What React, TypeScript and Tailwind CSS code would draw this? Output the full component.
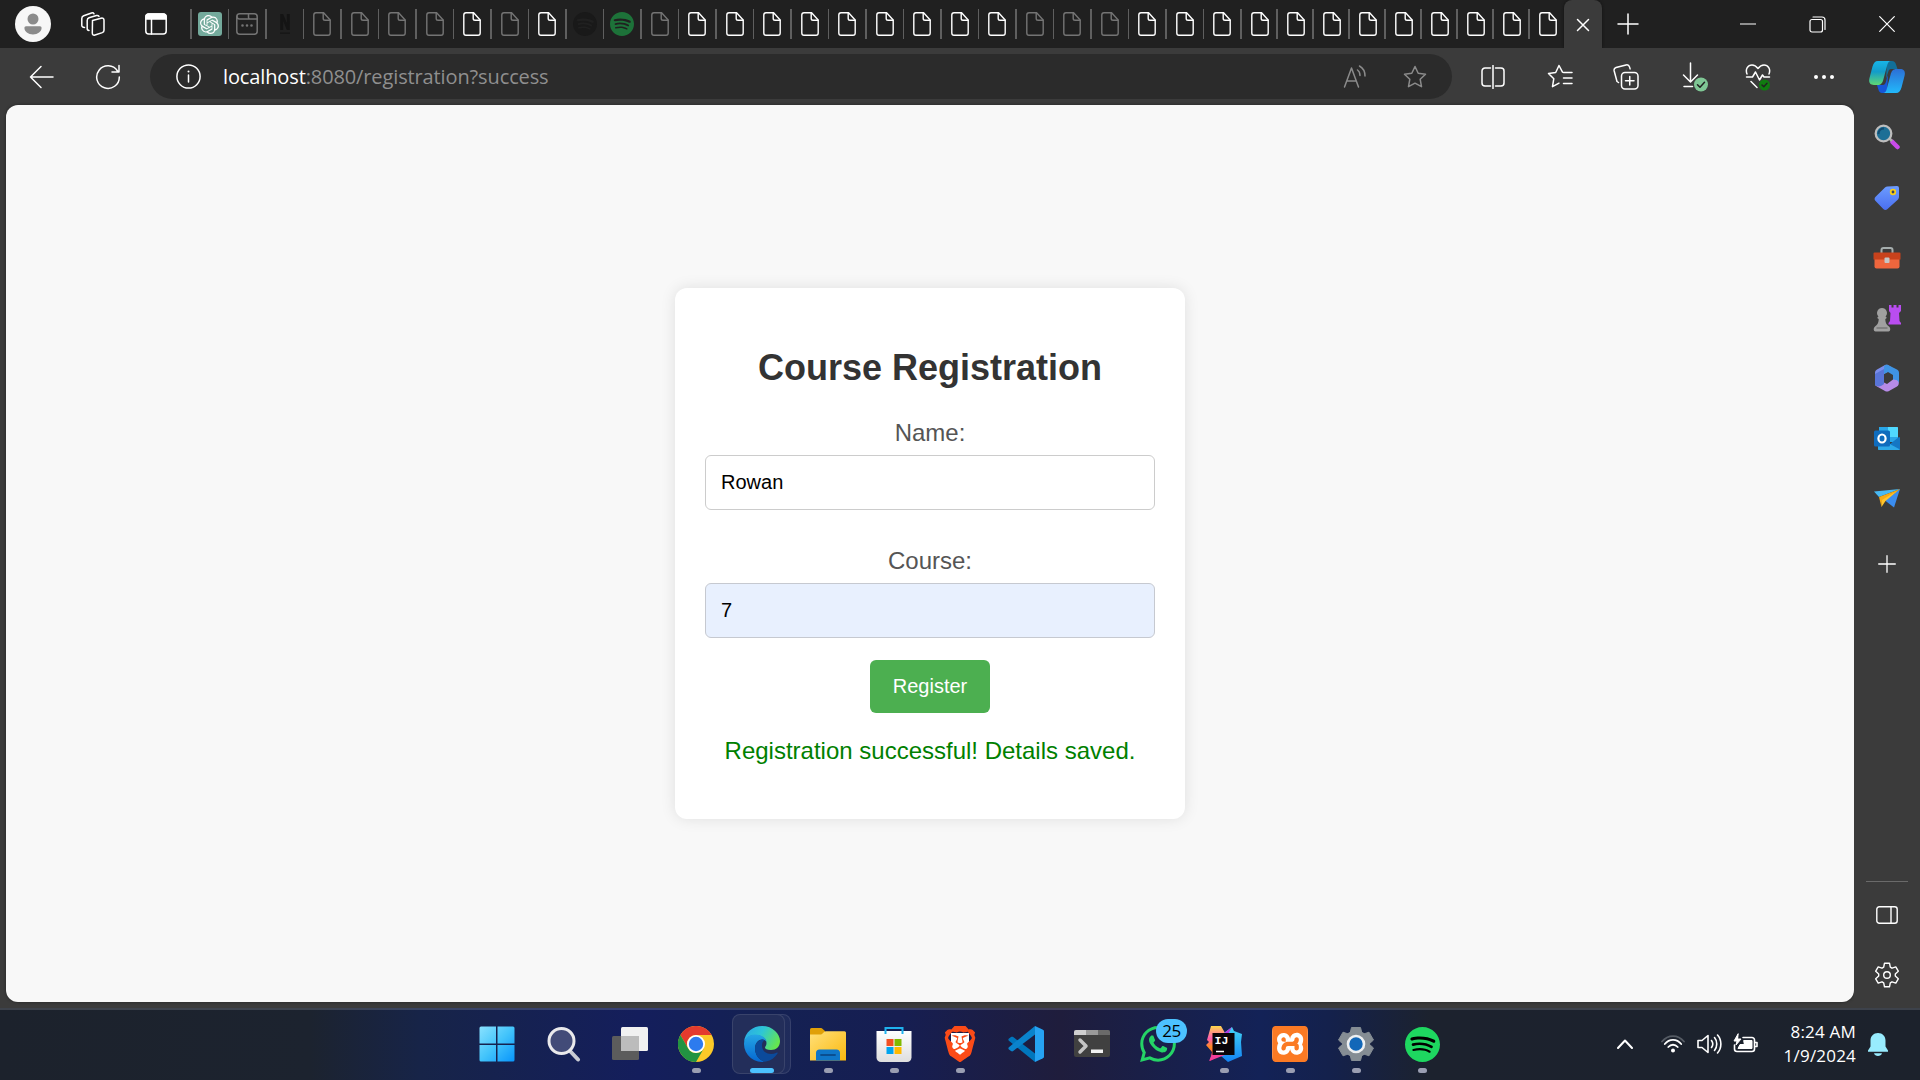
import React from "react";
import { SiOpenai, SiSpotify, SiBrave, SiXampp, SiWhatsapp } from "react-icons/si";

type P = { children: React.ReactNode; w?: number; h?: number; vb?: string; sw?: number; className?: string };

function Line({ children, w = 24, h = 24, vb = "0 0 24 24", sw = 1.5, className = "text-white" }: P) {
  return (
    <svg width={w} height={h} viewBox={vb} fill="none" stroke="currentColor" strokeWidth={sw} strokeLinecap="round" strokeLinejoin="round" className={"shrink-0 " + className}>
      {children}
    </svg>
  );
}

function Art({ children, w = 36, h = 36, vb = "0 0 36 36" }: P) {
  return (
    <svg width={w} height={h} viewBox={vb} className="shrink-0">
      {children}
    </svg>
  );
}

function FileIcon({ dim }: { dim: boolean }) {
  return (
    <Line w={18} vb="0 0 18 24" sw={1.4} className={dim ? "text-[#747474]" : "text-white"}>
      <path d="M3 .8h7.6L17.2 8v13a2.2 2.2 0 0 1-2.2 2.2H3A2.2 2.2 0 0 1 .8 21V3A2.2 2.2 0 0 1 3 .8z" />
      <path d="M10.2 1v5.4a1.8 1.8 0 0 0 1.8 1.8h5" />
    </Line>
  );
}

function TabIcon({ kind }: { kind: string }) {
  if (kind === "gpt")
    return (
      <div className="flex size-6 items-center justify-center rounded-[3px] bg-[#74aa9c] text-white">
        <SiOpenai size={19} />
      </div>
    );
  if (kind === "app")
    return (
      <Line w={22} h={22} vb="0 0 22 22" className="text-[#747474]">
        <rect x=".8" y=".8" width="20.4" height="20.4" rx="3" />
        <path d="M1 3.500c0 1.500 1 2.500 2.500 2.500h18M12.500 1v3.500a1.500 1.500 0 0 0 1.500 1.500" />
        <path d="M6.500 12.500h.01M11 12.500h.01M15.500 12.500h.01" strokeWidth="2.600" />
      </Line>
    );
  if (kind === "n")
    return (
      <Art w={12} h={22} vb="0 0 12 22">
        <path d="M1.200 1h3l3.600 9V1h3v16h-3L4.200 8v9h-3zM1 19.500h10v1.300H1z" fill="#141414" />
      </Art>
    );
  if (kind === "dark") return <SiSpotify size={24} className="text-[#191919]" />;
  if (kind === "spot") return <SiSpotify size={24} className="text-[#1d7239]" />;
  return <FileIcon dim={kind === "d"} />;
}

const tabs = "gpt app n d d d d b d b dark spot d b b b b b b b b b d d d b b b b b b b b b b b b".split(" ");

function TopBar() {
  return (
    <div className="flex h-12 shrink-0 bg-[#202020]">
      <div className="flex w-[190px] shrink-0 items-center pl-[15px]">
        <Art w={36} h={36}>
          <circle cx="18" cy="18" r="18" fill="#f7f7f7" />
          <circle cx="18" cy="13" r="5.500" fill="#8b8b8b" />
          <path d="M11 20.200h14a1.600 1.600 0 0 1 1.600 1.600c0 4-3.800 6.600-8.600 6.600s-8.600-2.600-8.600-6.600a1.600 1.600 0 0 1 1.600-1.600z" fill="#8b8b8b" />
        </Art>
        <div className="w-[29px]" />
        <Line w={26} h={26} vb="0 0 26 26">
          <path d="M12.500 9.500 21 7.200c1.800-.5 3 .3 3 2v10c0 1.200-.6 2-1.700 2.400L15 24c-1.600.5-2.700-.3-2.700-1.900z" />
          <path d="M9 19.500c-1 0-1.800-.7-1.800-1.900V9.500c0-1.400.6-2.200 1.800-2.700l7.500-2.300c1.200-.3 2 0 2.500.9M4.500 16.500c-1.600 0-2.700-.7-2.700-2.200V7.500c0-1.400.6-2.300 1.900-2.800L11.500 2c1.200-.4 2-.1 2.500.8" />
        </Line>
        <div className="w-[39px]" />
        <Line w={22} h={22} vb="0 0 22 22">
          <rect x=".8" y="1" width="20.400" height="20" rx="3" />
          <path d="M1 3.500A2.500 2.500 0 0 1 3.500 1h15A2.500 2.500 0 0 1 21 3.500V6H1z" fill="currentColor" />
          <path d="M6.500 6v15" />
        </Line>
      </div>
      {tabs.map((k, i) => (
        <div key={i} className={(i < 28 ? "w-[37.5px]" : "w-[36px]") + " flex shrink-0 items-center"}>
          <div className="h-[30px] w-[1.5px] shrink-0 bg-[#5f5f5f]" />
          <div className="flex w-[36px] shrink-0 justify-center">
            <TabIcon kind={k} />
          </div>
        </div>
      ))}
      <div className="flex w-[38px] shrink-0 items-center justify-center rounded-t-lg bg-[#3b3b3b] shadow-[0_0_3px_#111]">
        <Line w={14} h={14} vb="0 0 14 14" className="mt-0.5 text-white">
          <path d="m1.500 1.500 11 11M12.500 1.500l-11 11" />
        </Line>
      </div>
      <div className="flex grow items-center pl-[15px]">
        <Line w={22} h={22} vb="0 0 22 22">
          <path d="M11 1v20M1 11h20" />
        </Line>
        <div className="w-[101px]" />
        <Line w={16} h={16} vb="0 0 16 16" sw={1.2}>
          <path d="M.5 8h15" />
        </Line>
        <div className="w-[53px]" />
        <Line w={17} h={17} vb="0 0 17 17" sw={1.2}>
          <rect x="1" y="3.500" width="12.500" height="12.500" rx="2" />
          <path d="M4 1h9a3 3 0 0 1 3 3v9.500" />
        </Line>
        <div className="w-[53px]" />
        <Line w={16} h={16} vb="0 0 16 16" sw={1.2}>
          <path d="m.7.700 14.600 14.600M15.300.700.700 15.300" />
        </Line>
      </div>
    </div>
  );
}

const star = "m12 1.500 3.200 6.700 7.300 1-5.300 5.100 1.300 7.400L12 18.200l-6.500 3.500 1.300-7.400L1.500 9.200l7.300-1z";

function Copilot() {
  return (
    <Art w={36} h={34} vb="0 0 36 34">
      <defs>
        <linearGradient id="cpA" x1="0" y1="0" x2="0" y2="1">
          <stop offset="0" stopColor="#17b5e8" />
          <stop offset=".45" stopColor="#139cc9" />
          <stop offset="1" stopColor="#5fd873" />
        </linearGradient>
        <linearGradient id="cpB" x1="0" y1="0" x2="0" y2="1">
          <stop offset="0" stopColor="#2c6fd6" />
          <stop offset="1" stopColor="#22b9fb" />
        </linearGradient>
      </defs>
      <path d="M18 1h5c2.200 0 3.400 1.300 4 3.400L28.500 9H22c-3 0-3 5-5 10z" fill="#116f99" />
      <path d="M18 33h-5c-2 0-3-1-3.600-3.400L8 25h6c3 0 3-5 5-10z" fill="#1656d8" />
      <path d="M9 1h13c-2 0-3 1.500-3.600 3.600L14.500 19c-1 4-2.500 6-6 6H5c-4.500 0-5.500-3-4.500-7l3-11.500C4.500 3 6 1 9 1z" fill="url(#cpA)" />
      <path d="M27 33H14c2 0 3-1.500 3.600-3.600L21.500 15c1-4 2.500-6 6-6H31c4.500 0 5.500 3 4.500 7l-3 11.500C31.500 31 30 33 27 33z" fill="url(#cpB)" />
    </Art>
  );
}

function Toolbar() {
  return (
    <div className="flex h-[57px] shrink-0 items-center bg-[#3b3b3b] pl-[29px]">
      <Line w={25} h={24} vb="0 0 25 24">
        <path d="M24 12H1.500M12 1.500 1.500 12 12 22.500" />
      </Line>
      <div className="w-[41px]" />
      <Line w={26} h={26} vb="0 0 26 26">
        <path d="M22.500 7A11.300 11.300 0 1 0 24.300 13M24 1.500V8h-7" />
      </Line>
      <div className="ml-[29px] flex h-[45px] w-[1302px] shrink-0 items-center rounded-full bg-[#2b2b2b] pl-[26px]">
        <Line w={25} h={25} vb="0 0 25 25">
          <circle cx="12.500" cy="12.500" r="11.600" />
          <path d="M12.500 11v7" />
          <path d="M12.500 7.500h.01" strokeWidth="2" />
        </Line>
        <div className="ml-[22px] w-[1120px] whitespace-nowrap font-['Open_Sans','Noto_Sans',sans-serif] text-[20px] leading-[27px] tracking-[-0.12px] text-[#8f8f8f]">
          <span className="text-white">localhost</span>:8080/registration?success
        </div>
        <Line w={25} h={24} vb="0 0 25 24" className="text-[#8b8b8b]">
          <path d="m1.500 22 7-19 7 19M4 16h9M14.500 5c1.700 1.200 2.500 3 2.500 5.500M16.500 1c3.500 2 5.500 5.500 5.500 10" />
        </Line>
        <div className="w-[35px]" />
        <Line className="text-[#8b8b8b]">
          <path d={star} />
        </Line>
      </div>
      <div className="ml-[29px] flex items-center">
        <Line w={24} h={24}>
          <path d="M9.500 3H4a3 3 0 0 0-3 3v12a3 3 0 0 0 3 3h5.500M14.500 3H20a3 3 0 0 1 3 3v12a3 3 0 0 1-3 3h-5.500M12 .500v23" />
        </Line>
        <div className="w-[42px]" />
        <Line w={26} h={25} vb="0 0 26 25">
          <path d="M15.500 8.200 12 1.500 8.700 8.500l-7.200 1 5.300 5.200-1.300 8L12 19.200" />
          <path d="M16.500 8.500H25M16.500 14H25M16.500 19.500H25" />
        </Line>
        <div className="w-[40px]" />
        <Line w={26} h={26} vb="0 0 26 26">
          <rect x="8.500" y="8.500" width="16.500" height="16.500" rx="3.500" />
          <path d="M16.750 12.500v8.500M12.500 16.750H21M5.500 18.500 4 17.500 1.200 7C.8 5.300 1.300 4 3 3.500l10-2.600c1.700-.4 3 .3 3.500 2l.6 2" />
        </Line>
        <div className="w-[43px]" />
        <Line w={26} h={30} vb="0 0 26 30">
          <path d="M8.500 1v18.500M1.500 13l7 7 7-7M2 24.500h8.500" />
          <circle cx="19" cy="22.500" r="7" fill="#7fc795" stroke="none" />
          <path d="m15.500 22.700 2.500 2.500 4.500-5" stroke="#202020" />
        </Line>
        <div className="w-[37px]" />
        <Line w={26} h={30} vb="0 0 26 30">
          <path d="M2 12C0 7 3 3 7 3c3 0 4.500 1.500 6 3.500C14.500 4.500 16 3 19 3c4 0 7 4 5 9M1.500 15h6l3-5 4 8 3-5 1.500 2h5.500M6 19.500l6 6" />
          <circle cx="19.500" cy="23" r="5.500" fill="#107c10" stroke="none" />
          <path d="m17 23 1.800 1.800 3.200-3.500" stroke="#222" />
        </Line>
        <div className="w-[43px]" />
        <Line w={20} h={6} vb="0 0 20 6" sw={4}>
          <path d="M2 3h.01M10 3h.01M18 3h.01" />
        </Line>
        <div className="w-[35px]" />
        <Copilot />
      </div>
    </div>
  );
}

function Sidebar() {
  return (
    <div className="flex w-[65px] shrink-0 flex-col items-center bg-[#3b3b3b] pb-[6px]">
      <div className="flex h-[63px] w-full items-center justify-center">
        <Art w={26} h={26} vb="0 0 26 26">
          <path d="m18.500 18 5 5" stroke="#c94bea" strokeWidth="4.500" strokeLinecap="round" />
          <path d="m15 14 3 3" stroke="#aaa" strokeWidth="2.500" />
          <circle cx="9.500" cy="9.500" r="7.800" fill="#1d6f96" stroke="#bdbdbd" strokeWidth="2.300" />
          <path d="M4.500 10c0-4 3-5.500 5.500-5.500" stroke="#124b70" strokeWidth="2" fill="none" />
        </Art>
      </div>
      <div className="flex h-[59px] items-center">
        <Art w={26} h={26} vb="0 0 26 26">
          <defs>
            <linearGradient id="tg" x1="0" y1="0" x2="0" y2="1"><stop stopColor="#6c9cff" /><stop offset="1" stopColor="#4a6ff0" /></linearGradient>
          </defs>
          <path d="M13.500 1.500 23 1a2 2 0 0 1 2 2v9c0 1-.4 1.800-1 2.500L13.500 24a3 3 0 0 1-4.200 0L1.600 16a3 3 0 0 1 0-4.200L11 2.400c.7-.7 1.500-.9 2.500-.9z" fill="url(#tg)" />
          <circle cx="19" cy="7" r="2.300" fill="#39425c" stroke="#f8ce19" strokeWidth="1.800" />
        </Art>
      </div>
      <div className="flex h-[62px] items-center">
        <Art w={28} h={22} vb="0 0 28 22">
          <path d="M8.500 6V3a2 2 0 0 1 2-2h7a2 2 0 0 1 2 2v3" fill="none" stroke="#a5adad" strokeWidth="2" />
          <rect x="1.500" y="8" width="25" height="13.500" rx="2" fill="#ee663d" />
          <path d="M.5 6.500a1 1 0 0 1 1-1h25a1 1 0 0 1 1 1v6H.5z" fill="#c8421c" />
          <rect x="11.500" y="10.500" width="5" height="5.500" rx="1" fill="#c6c6c6" />
        </Art>
      </div>
      <div className="flex h-[58px] items-center">
        <Art w={28} h={28} vb="0 0 28 28">
          <path d="M16 1h2.500v2.500h2V1h3v2.500h2V1H28v6l-2 2 .5 8 1.500 2v1.500H15.500V19l1.500-2 .5-8L16 7z" fill="#b94df0" />
          <path d="M9 4a5 5 0 0 1 3.500 8.500c1.500.5 1.500 2-.2 2.500.2 4 1 5.500 3.700 7.500 2 1.500 1.500 5-.5 5h-13c-2 0-2.500-3.500-.5-5C4.700 20.500 5.500 19 5.700 15c-1.700-.5-1.700-2-.2-2.500A5 5 0 0 1 9 4z" fill="#a0a0a0" />
          <path d="M3.500 24h11" stroke="#777" strokeWidth="1.500" />
        </Art>
      </div>
      <div className="flex h-[62px] items-center">
        <Art w={26} h={28} vb="0 0 26 28">
          <path d="M11 1 3 5.500C1.500 6.500 1 7.500 1 9v12c3 2 6 2 9-1V10l7-4V3l-3-2c-1-.5-2-.500-3 0z" fill="#7b8deb" />
          <path d="M14 1c-3-1-4 1-4 3v6l4-2 5 3v5l4.500 4c1-1 1.500-1.500 1.500-3V9c0-1.500-.5-2.500-2-3.500z" fill="#3f94e4" />
          <path d="M1 20c0 1 1 2 2 2.500l8 4.500c1.300.7 2.700.7 4 0l8-4.500c3-2 2-6-1-6.500l-3-.5-6 4.500-4-2c-3 3-6 3.500-8 2z" fill="#b78be8" />
          <path d="m1 10 9-5v15c-3 3-7 3-9 1z" fill="#5975d8" />
        </Art>
      </div>
      <div className="flex h-[58px] items-center">
        <Art w={26} h={24} vb="0 0 26 24">
          <path d="M5 1h18a1 1 0 0 1 1 1v14H5z" fill="#2aa6e8" />
          <path d="M14 1h9a1 1 0 0 1 1 1v9H14z" fill="#50d9ff" />
          <path d="m25 11 1 .500V23a1 1 0 0 1-1 1H5a1 1 0 0 1-1-1v-5h12z" fill="#1476c4" />
          <path d="M4 17h10l12 6.500c-.3.300-.6.500-1 .500H5a1 1 0 0 1-1-1z" fill="#2da9e8" />
          <rect y="4.500" width="16" height="16" rx="1.500" fill="#0f6cbd" />
          <ellipse cx="8" cy="12.500" rx="3.600" ry="4" fill="none" stroke="#fff" strokeWidth="2.200" />
        </Art>
      </div>
      <div className="flex h-[62px] items-center">
        <Art w={26} h={19} vb="0 0 26 19">
          <path d="M0 2.500 26 0 5 8z" fill="#48b9f3" />
          <path d="m5 8 21-8L8 12.500 7.500 18z" fill="#f6aa13" />
          <path d="M26 0 20 18.500l-9-7z" fill="#3a8df0" />
          <path d="m7.500 18 4-6L26 0 8 11z" fill="#ffc52d" />
        </Art>
      </div>
      <div className="flex h-[69px] items-center">
        <Line w={18} h={18} vb="0 0 18 18" sw={1.3}>
          <path d="M9 .700v16.600M.700 9h16.600" />
        </Line>
      </div>
      <div className="grow" />
      <div className="h-px w-[42px] bg-[#6a6a6a]" />
      <div className="flex h-[66px] items-center">
        <Line w={22} h={18} vb="0 0 22 18" sw={1.4}>
          <rect x=".8" y=".8" width="20.400" height="16.400" rx="2.500" />
          <path d="M15 1v16" />
        </Line>
      </div>
      <div className="flex h-[54px] items-center">
        <Line w={26} h={26} vb="0 0 26 26" sw={1.4}>
          <path d="M10.500 1.200h5l.8 4 1.700 1 3.800-1.300 2.500 4.300-3 2.700v2.200l3 2.700-2.500 4.300-3.800-1.300-1.700 1-.8 4h-5l-.8-4-1.700-1-3.800 1.300-2.500-4.300 3-2.700v-2.200l-3-2.700 2.500-4.300L8 6.200l1.700-1z" />
          <circle cx="13" cy="13" r="3.300" />
        </Line>
      </div>
    </div>
  );
}

function Registration() {
  return (
    <main className="flex h-[897px] w-[1848px] shrink-0 items-center justify-center rounded-xl bg-[#f8f8f8] font-['Liberation_Sans',Arial,sans-serif] shadow-[0_0_3px_#222]">
      <div className="flex h-[531px] w-[510px] flex-col items-center rounded-xl bg-white px-[30px] pt-[59px] shadow-[0_0_15px_rgba(0,0,0,0.1)]">
        <h2 className="text-[36px] font-bold leading-[41px] text-[#333]">Course Registration</h2>
        <label htmlFor="name" className="mt-[31px] text-[24px] leading-[27px] text-[#555]">Name:</label>
        <input id="name" readOnly value="Rowan" className="mt-[9px] h-[55px] w-full rounded-[6px] border border-[#ccc] bg-white px-[15px] text-[20px] text-black" />
        <label htmlFor="course" className="mt-[37px] text-[24px] leading-[27px] text-[#555]">Course:</label>
        <input id="course" readOnly value="7" className="mt-[9px] h-[55px] w-full rounded-[6px] border border-[#c6c9d0] bg-[#e8f0fe] px-[15px] text-[20px] text-black" />
        <button className="mt-[22px] h-[53px] w-[120px] rounded-[6px] bg-[#4caf50] pb-0.5 text-[20px] text-white">Register</button>
        <p className="mt-[24px] whitespace-nowrap text-[24px] leading-[27px] text-[#008000]">Registration successful! Details saved.</p>
      </div>
    </main>
  );
}

function StartIcon() {
  return (
    <Art>
      <defs>
        <linearGradient id="win" x1="0" y1="0" x2="1" y2="1"><stop stopColor="#8ae2ff" /><stop offset=".5" stopColor="#43c4fb" /><stop offset="1" stopColor="#0895fb" /></linearGradient>
      </defs>
      <path d="M2 .5h15v17H.500V2A1.500 1.500 0 0 1 2 .500zM18.500.500H34A1.500 1.500 0 0 1 35.500 2v15.500h-17zM.500 19H17v16.500H2A1.500 1.500 0 0 1 .500 34zM18.500 19h17v15a1.500 1.500 0 0 1-1.500 1.500H18.500z" fill="url(#win)" />
    </Art>
  );
}

function SearchIcon() {
  return (
    <Art>
      <path d="m24.500 25.500 7.500 8" stroke="#c9ccd4" strokeWidth="4" strokeLinecap="round" />
      <circle cx="15.500" cy="15" r="12.500" fill="#424b78" stroke="#e9e9ec" strokeWidth="3" />
    </Art>
  );
}

function TaskViewIcon() {
  return (
    <Art>
      <rect x="0" y="10" width="27" height="24" rx="1.500" fill="#5c5c5c" />
      <rect x="9" y="1" width="27" height="24" rx="1.500" fill="#f1f1f1" />
      <path d="M9 10h18v15H9z" fill="#bcbcbc" />
    </Art>
  );
}

function ChromeIcon() {
  return (
    <Art>
      <circle cx="18" cy="18" r="18" fill="#fbc928" />
      <path d="M2.400 9A18 18 0 0 1 33.600 9H18a9 9 0 0 0-7.800 13.500z" fill="#e33b2e" />
      <path d="M2.400 9A18 18 0 0 0 18 36l7.800-13.500A9 9 0 0 1 10.200 22.500z" fill="#229342" />
      <circle cx="18" cy="18" r="9" fill="#fff" />
      <circle cx="18" cy="18" r="7.200" fill="#2d7bee" />
    </Art>
  );
}

function EdgeIcon() {
  return (
    <Art>
      <defs>
        <linearGradient id="eg1" x1="0" y1=".2" x2="1" y2=".6"><stop stopColor="#2aa9e7" /><stop offset=".45" stopColor="#2ec6d6" /><stop offset="1" stopColor="#66e84c" /></linearGradient>
        <linearGradient id="eg2" x1="0" y1="0" x2="0" y2="1"><stop stopColor="#25a6e5" /><stop offset="1" stopColor="#0567d1" /></linearGradient>
      </defs>
      <path d="M0 16C1 6 9 0 18 0c11 0 18 8 18 15 0 6-4 9-9 9-4 0-6-1.300-6-2.500 0-1 1.500-1.500 1.500-4.500C22.500 12 17 9 11 9 6 9 2 12 0 16z" fill="url(#eg1)" />
      <path d="M0 18c0-6 5-9.500 11-9.500 7 0 11.500 4 11.500 8 0-1.500-1.500-3-4.500-3-4 0-7 4-7 9C11 30 17 36 22 35.500A18 18 0 0 1 0 18z" fill="url(#eg2)" />
      <path d="M18.500 13.500C14 14 11 18 11 22.500 11 30 17 36 22 35.500c5-1 9-4 11.500-8 .5-.8-.2-1.200-1-.8-6 3-14 .8-14.500-6.700-.1-3 .8-4.500 2.500-6z" fill="#0b4a9b" />
    </Art>
  );
}

function FolderIcon() {
  return (
    <Art>
      <defs>
        <linearGradient id="fo" x1="0" y1="0" x2="1" y2="1"><stop stopColor="#ffe07a" /><stop offset="1" stopColor="#fbb90e" /></linearGradient>
      </defs>
      <path d="M0 3.500A1.500 1.500 0 0 1 1.500 2h9c1 0 1.500.3 2.200 1L15 5v7H0z" fill="#e0a008" />
      <path d="M0 8.500h10c1.500 0 2-.5 3-1.500l1.200-1c.5-.5 1-.7 1.800-.7h18.500A1.500 1.500 0 0 1 36 6.800v27.700H0z" fill="url(#fo)" />
      <path d="M6 34.500V27a3.500 3.500 0 0 1 3.500-3.500h17A3.500 3.500 0 0 1 30 27v7.500z" fill="#0f76c8" />
      <path d="M11 29h14" stroke="#0a4e90" strokeWidth="1.800" strokeLinecap="round" />
    </Art>
  );
}

function StoreIcon() {
  return (
    <Art>
      <defs>
        <linearGradient id="st" x1="0" y1="0" x2="0" y2="1"><stop stopColor="#fff" /><stop offset="1" stopColor="#dedede" /></linearGradient>
      </defs>
      <path d="M.500 5h35v26.500a4.500 4.500 0 0 1-4.500 4.500H5a4.500 4.500 0 0 1-4.500-4.500z" fill="url(#st)" />
      <path d="M9.500 8V2h17v6" fill="none" stroke="#1fb2ee" strokeWidth="2" />
      <path d="M10.500 13h7v7h-7z" fill="#f25022" />
      <path d="M18.500 13h7v7h-7z" fill="#7fba00" />
      <path d="M10.500 21h7v7h-7z" fill="#00a4ef" />
      <path d="M18.500 21h7v7h-7z" fill="#ffb900" />
    </Art>
  );
}

function BraveIcon() {
  return (
    <div className="relative flex size-9 items-center justify-center">
      <div className="absolute left-[9px] top-[7px] h-[22px] w-[18px] rounded-b-full bg-white" />
      <SiBrave size={36} className="relative text-[#fb4b17]" />
    </div>
  );
}

function CodeIcon() {
  return (
    <Art>
      <path d="M1 12.500 3 11c.7-.5 1.500-.500 2.200 0L27 27.500V36L.900 14.800c-.8-.7-.7-1.600.1-2.300z" fill="#0076bd" />
      <path d="M1 23.500 3 25c.7.500 1.500.500 2.200 0L27 8.500V0L.900 21.200c-.8.700-.7 1.600.1 2.300z" fill="#0a83cc" />
      <path d="m27 0 7.500 3.500c1 .5 1.500 1 1.500 2v25c0 1-.5 1.500-1.500 2L27 36z" fill="#26a2f2" />
    </Art>
  );
}

function TerminalIcon() {
  return (
    <Art>
      <rect y="4" width="36" height="27" rx="2" fill="#404040" />
      <path d="M0 9V6a2 2 0 0 1 2-2h10v5z" fill="#cfcfcf" />
      <path d="M12 4h12v5H12z" fill="#9a9a9a" />
      <path d="M24 4h10a2 2 0 0 1 2 2v3H24z" fill="#6a6a6a" />
      <path d="m6 14 6 6-6 6" fill="none" stroke="#c4c4c4" strokeWidth="3.500" strokeLinecap="round" strokeLinejoin="round" />
      <path d="M17 23.500h12V27H17z" fill="#f2f2f2" />
    </Art>
  );
}

function WhatsappIcon() {
  return (
    <div className="relative size-9">
      <SiWhatsapp size={36} className="text-[#25d366]" />
      <div className="absolute -top-[7px] left-[16px] flex h-6 w-[31px] items-center justify-center rounded-full bg-[#4cc2ff] font-['Open_Sans','Noto_Sans',sans-serif] text-[17px] leading-6 tracking-[-0.5px] text-black">25</div>
    </div>
  );
}

function IntellijIcon() {
  return (
    <Art>
      <defs>
        <linearGradient id="ij1" x1="0" y1="0" x2="0" y2="1"><stop stopColor="#ffd84a" /><stop offset=".35" stopColor="#ff5db0" /><stop offset=".6" stopColor="#ff8a1e" /><stop offset="1" stopColor="#fd2e7e" /></linearGradient>
        <linearGradient id="ij2" x1="0" y1="0" x2="0" y2="1"><stop stopColor="#42d5f5" /><stop offset="1" stopColor="#1382f2" /></linearGradient>
      </defs>
      <path d="M5 0h10l4 7v20L4 35l2-9-6-7 3-3-2-2z" fill="url(#ij1)" />
      <path d="m18 7 8-6 2 4 8 3-1 8 1 14-14 6-7-6z" fill="url(#ij2)" />
      <path d="m15 8 3 8 8-15-8 6z" fill="#b03be0" />
      <path d="M3 35 19 29l-4-1H6z" fill="#f33e9a" />
      <rect x="6.500" y="7" width="22" height="22" fill="#0a0508" />
      <path d="M10 25.500h8" stroke="#fff" strokeWidth="1.500" />
      <text x="8.500" y="18.200" fontSize="11.500" fontWeight="bold" fill="#fff" fontFamily="Liberation Mono, monospace">IJ</text>
    </Art>
  );
}

function XamppIcon() {
  return (
    <div className="flex size-9 items-center justify-center rounded-[6px] bg-white">
      <SiXampp size={36} className="text-[#fb7a24]" />
    </div>
  );
}

function SettingsIcon() {
  return (
    <Art>
      <g fill="#858d94">
        <circle cx="18" cy="18" r="13.500" />
        <path d="m13.500 1.500 9 0 1.500 6H12zM12 28.500h12l-1.500 6h-9zM.500 14 5 6.200l6 2L5.500 18.500zM25 8.200l6-2L35.500 14l-5 4.500zM.500 22 5 29.800l6-2L5.500 17.500zM25 27.800l6 2 4.500-7.800-5-4.500z" strokeLinejoin="round" stroke="#858d94" strokeWidth="1" />
      </g>
      <circle cx="18" cy="18" r="8" fill="#1267b8" stroke="#eef0f2" strokeWidth="2.600" />
    </Art>
  );
}

function SpotifyIcon() {
  return (
    <div className="flex size-[35px] items-center justify-center rounded-full bg-[radial-gradient(#000_60%,transparent_62%)]">
      <SiSpotify size={35} className="text-[#1ed760]" />
    </div>
  );
}

const apps: { icon: React.ReactNode; open?: boolean; active?: boolean }[] = [
  { icon: <StartIcon /> },
  { icon: <SearchIcon /> },
  { icon: <TaskViewIcon /> },
  { icon: <ChromeIcon />, open: true },
  { icon: <EdgeIcon />, active: true },
  { icon: <FolderIcon />, open: true },
  { icon: <StoreIcon />, open: true },
  { icon: <BraveIcon />, open: true },
  { icon: <CodeIcon /> },
  { icon: <TerminalIcon /> },
  { icon: <WhatsappIcon /> },
  { icon: <IntellijIcon />, open: true },
  { icon: <XamppIcon />, open: true },
  { icon: <SettingsIcon />, open: true },
  { icon: <SpotifyIcon />, open: true },
];

function Taskbar() {
  return (
    <div className="flex h-[72px] shrink-0 border-t-2 border-white/15 bg-[#1c222c] bg-[linear-gradient(90deg,#1c222c_0px,#1c232f_310px,#172448_420px,#141e5c_640px,#142153_760px,#161e52_900px,#1f1d3c_1060px,#1a1f47_1140px,#132257_1260px,#14214c_1330px,#1c222e_1430px,#1c222c_1920px)] bg-origin-border">
      <div className="ml-[465px] flex">
        {apps.map((a, i) => (
          <div key={i} className={"relative flex w-[66px] flex-col items-center pt-[16px]" + (i === 0 ? " -ml-px mr-px" : "")}>
            {a.active && (
              <>
                <div className="absolute left-[8px] top-[4px] h-[60px] w-[54px] rounded-lg border border-white/10 bg-white/5" />
                <div className="absolute left-[3px] top-[4px] h-[60px] w-[53px] rounded-lg border border-white/10 bg-[#232e5a]" />
              </>
            )}
            <div className="relative flex size-9 items-center justify-center">{a.icon}</div>
            {a.open && <div className="mt-[6px] h-[5px] w-[9px] rounded-full bg-[#9a9eb2]" />}
            {a.active && <div className="relative mt-[6px] h-[5px] w-6 rounded-full bg-[#4cc2ff]" />}
          </div>
        ))}
      </div>
      <div className="flex grow items-center justify-end pb-[2px] pr-[32px] font-['Open_Sans','Noto_Sans',sans-serif] text-white">
        <Line w={16} h={10} vb="0 0 16 10" sw={2}>
          <path d="m1 9 7-7.500L15 9" />
        </Line>
        <Line w={24} h={20} vb="0 0 24 20" sw={1.8} className="ml-[28px] text-white">
          <path d="M1 7.500C7 .200 17 .200 23 7.500" stroke="#555b64" />
          <path d="M3.800 10c4.500-5.500 11.900-5.500 16.400 0M7.300 13c2.700-3 6.700-3 9.400 0" />
          <circle cx="12" cy="16.500" r="1.600" fill="currentColor" stroke="none" />
          <circle cx="12" cy="16.500" r="1" />
        </Line>
        <Line w={25} h={22} vb="0 0 25 22" sw={1.6} className="ml-[12px] text-white">
          <path d="M1 7.500h4L11 2.500v17l-6-5H1zM14.500 7.500c1.500 2 1.500 5 0 7M17.500 4.500c3 3.500 3 9.500 0 13M20.500 2c4.500 5 4.500 13 0 18" />
        </Line>
        <Line w={25} h={22} vb="0 0 25 22" sw={1.6} className="ml-[11px] text-white">
          <path d="M10 4.500h9a2.500 2.500 0 0 1 2.500 2.500v9a2.500 2.500 0 0 1-2.500 2.500H4A2.500 2.500 0 0 1 1.500 16v-4M22.500 9.500H24v4h-1.500" />
          <path d="M11 7.500h8v8H5l2-4h4z" fill="currentColor" strokeWidth="1" />
          <path d="M5 1 1 8h3l-1 4 5-6H5z" fill="currentColor" strokeWidth="1" />
        </Line>
        <div className="ml-[10px] w-[88px] whitespace-nowrap text-right text-[17px] leading-6 tracking-[0.2px]">
          <div>8:24 AM</div>
          <div>1/9/2024</div>
        </div>
        <div className="ml-[12px] pt-[2px]">
          <Art w={20} h={24} vb="0 0 20 24">
            <path d="M10 0c4.500 0 7.500 3.200 7.500 7.500v6L20 17.500v1.300H0v-1.300l2.500-4v-6C2.500 3.200 5.500 0 10 0zM6 20.300h8c-.5 1.800-2 2.700-4 2.700s-3.500-.9-4-2.700z" fill="#98ecfe" />
          </Art>
        </div>
      </div>
    </div>
  );
}

export default function App() {
  return (
    <div className="flex h-[1080px] w-[1920px] flex-col overflow-hidden bg-[#3b3b3b]">
      <TopBar />
      <Toolbar />
      <div className="flex h-[903px] shrink-0 pl-[6px]">
        <Registration />
        <Sidebar />
      </div>
      <Taskbar />
    </div>
  );
}
